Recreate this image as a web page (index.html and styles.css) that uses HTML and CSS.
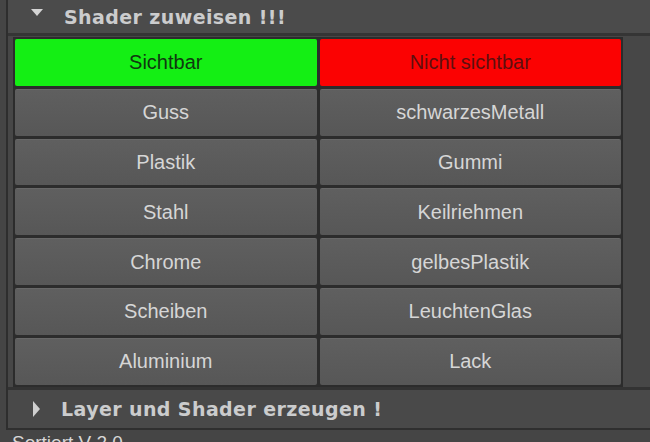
FILE: index.html
```html
<!DOCTYPE html>
<html>
<head>
    <title>Shader Tool</title>
    <link rel="stylesheet" href="styles.css">
</head>
<body>
    <div class="window">
        <div class="frame">
            <div class="frame-head">
                <span class="arrow-down"></span>
                <span class="frame-title">Shader zuweisen !!!</span>
            </div>
            <div class="frame-body">
                <div class="shader-grid">
                    <button class="btn btn-show">Sichtbar</button>
                    <button class="btn btn-hide">Nicht sichtbar</button>
                    <button class="btn">Guss</button>
                    <button class="btn">schwarzesMetall</button>
                    <button class="btn">Plastik</button>
                    <button class="btn">Gummi</button>
                    <button class="btn">Stahl</button>
                    <button class="btn">Keilriehmen</button>
                    <button class="btn">Chrome</button>
                    <button class="btn">gelbesPlastik</button>
                    <button class="btn">Scheiben</button>
                    <button class="btn">LeuchtenGlas</button>
                    <button class="btn">Aluminium</button>
                    <button class="btn">Lack</button>
                </div>
            </div>
        </div>

        <div class="frame collapsed">
            <div class="frame-head">
                <span class="arrow-right"></span>
                <span class="frame-title">Layer und Shader erzeugen !</span>
            </div>
        </div>

        <div class="footer">Sortiert V 2.0</div>
    </div>
</body>
</html>
```

FILE: styles.css
```css
body {
    margin: 0;
    background-color: #454545;
    font-family: "Liberation Sans", Arial, sans-serif;
}
.window {
    width: 650px;
    height: 442px;
    overflow: hidden;
    padding-left: 6px;
    box-sizing: border-box;
}
.frame {
    border-left: 2px solid #2e2e2e;
    background-color: #474747;
}
.frame-head {
    display: flex;
    align-items: center;
    height: 36px;
    background-color: #4b4b4b;
    border-bottom: 3px solid #353535;
    box-sizing: border-box;
}
.frame-title {
    margin-left: 21px;
    color: #cbcccd;
    font-family: "DejaVu Sans", Verdana, sans-serif;
    font-weight: bold;
    font-size: 19px;
    letter-spacing: 0.4px;
}
.arrow-down {
    margin-left: 23px;
    width: 0;
    height: 0;
    border-left: 6px solid transparent;
    border-right: 6px solid transparent;
    border-top: 7px solid #d4d4d4;
    margin-top: -8px;
}
.arrow-right {
    margin-left: 25px;
    width: 0;
    height: 0;
    border-top: 8px solid transparent;
    border-bottom: 8px solid transparent;
    border-left: 7px solid #cfcfcf;
}
.collapsed .frame-head {
    height: 43px;
    border-top: 3px solid #333;
    border-bottom: 2px solid #2f2f2f;
    background-color: #494949;
}
.frame-body {
    padding: 1px 27px 0 5px;
}
.shader-grid {
    display: grid;
    grid-template-columns: 1fr 1fr;
    grid-auto-rows: 46.8px;
    gap: 3px;
    padding: 2px;
    background-color: #2c2c2c;
}
.btn {
    font-family: "Liberation Sans", Arial, sans-serif;
    font-size: 20px;
    color: #d6d6d6;
    background: linear-gradient(#5f5f5f, #575757);
    border: none;
    border-top: 1px solid #686868;
    border-radius: 2px;
    padding: 0;
}
.btn-show {
    background: #14ef14;
    border-top-color: #14ef14;
    color: #103810;
}
.btn-hide {
    background: #fb0202;
    border-top-color: #fb0202;
    color: #5e0f0f;
}
.footer {
    padding: 2px 0 0 6px;
    color: #d8d8d8;
    font-size: 19px;
}
```
